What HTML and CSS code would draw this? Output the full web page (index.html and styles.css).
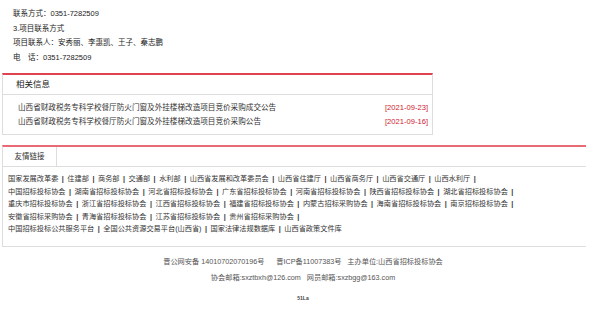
FILE: index.html
```html
<!DOCTYPE html>
<html lang="zh-CN">
<head>
    <meta charset="UTF-8">
    <title>山西省招标投标协会</title>
    <link rel="stylesheet" href="styles.css">
</head>
<body>
    <div class="contact">
        <p>联系方式：0351-7282509</p>
        <p>3.项目联系方式</p>
        <p>项目联系人：安秀丽、李惠凯、王子、秦志鹏</p>
        <p>电　话：0351-7282509</p>
    </div>

    <div class="related">
        <div class="related-head">相关信息</div>
        <ul class="related-list">
            <li><a href="#">山西省财政税务专科学校餐厅防火门窗及外挂楼梯改造项目竞价采购成交公告</a><span class="date">[2021-09-23]</span></li>
            <li><a href="#">山西省财政税务专科学校餐厅防火门窗及外挂楼梯改造项目竞价采购公告</a><span class="date">[2021-09-16]</span></li>
        </ul>
    </div>

    <div class="links">
        <div class="links-head"><span class="tab">友情链接</span></div>
        <div class="links-body">
            <div class="row">国家发展改革委<i>|</i>住建部<i>|</i>商务部<i>|</i>交通部<i>|</i>水利部<i>|</i>山西省发展和改革委员会<i>|</i>山西省住建厅<i>|</i>山西省商务厅<i>|</i>山西省交通厅<i>|</i>山西水利厅<i>|</i></div>
            <div class="row">中国招标投标协会<i>|</i>湖南省招标投标协会<i>|</i>河北省招标投标协会<i>|</i>广东省招标投标协会<i>|</i>河南省招标投标协会<i>|</i>陕西省招标投标协会<i>|</i>湖北省招标投标协会<i>|</i></div>
            <div class="row">重庆市招标投标协会<i>|</i>浙江省招标投标协会<i>|</i>江西省招标投标协会<i>|</i>福建省招标投标协会<i>|</i>内蒙古招标采购协会<i>|</i>海南省招标投标协会<i>|</i>南京招标投标协会<i>|</i></div>
            <div class="row">安徽省招标采购协会<i>|</i>青海省招标投标协会<i>|</i>江苏省招标投标协会<i>|</i>贵州省招标采购协会<i>|</i></div>
            <div class="row">中国招标投标公共服务平台<i>|</i>全国公共资源交易平台(山西省)<i>|</i>国家法律法规数据库<i>|</i>山西省政策文件库</div>
        </div>
    </div>

    <div class="footer">
        <p>晋公网安备 14010702070196号<span class="gap"></span>晋ICP备11007383号<span class="gap small"></span>主办单位:山西省招标投标协会</p>
        <p>协会邮箱:sxztbxh@126.com<span class="gap small"></span>网员邮箱:sxzbgg@163.com</p>
        <div class="counter">51La</div>
    </div>
</body>
</html>
```

FILE: styles.css
```css
body {
    margin: 0;
    background-color: #fff;
    color: #333;
    font-family: "Liberation Sans", "Noto Sans CJK SC", sans-serif;
    font-size: 7.2px;
}
p {
    margin: 0;
}
a {
    color: #333;
    text-decoration: none;
}
.contact {
    padding: 7px 0 0 13px;
    font-size: 7.5px;
    line-height: 14.5px;
    color: #222;
}
.related {
    margin: 8px 0 0 2px;
    width: 429px;
    border: 1px solid #ddd;
    border-top: 2px solid #e0434f;
}
.related-head {
    height: 19px;
    line-height: 19px;
    padding-left: 13px;
    font-size: 8.5px;
    color: #222;
    border-bottom: 1px solid #ddd;
}
.related-list {
    list-style: none;
    margin: 0;
    padding: 6px 4px 5px 15px;
    font-size: 7.6px;
}
.related-list li {
    display: flex;
    justify-content: space-between;
    line-height: 14px;
}
.date {
    color: #d0202f;
}
.links {
    margin: 10px 0 0 2px;
    width: 583px;
    border-left: 1px solid #ddd;
    border-bottom: 1px solid #ddd;
    border-top: 2px solid #e86a74;
}
.links-head {
    height: 19px;
    border-bottom: 1px solid #ddd;
}
.tab {
    display: inline-block;
    width: 53px;
    height: 19px;
    line-height: 19px;
    text-align: center;
    font-size: 7.5px;
    border-right: 1px solid #ddd;
}
.links-body {
    padding: 6px 0 10px 5px;
    line-height: 12.5px;
}
.row i {
    font-style: normal;
    font-weight: bold;
    margin: 0 3.5px;
}
.footer {
    margin-top: 7px;
    text-align: center;
    color: #555;
    line-height: 16px;
}
.gap {
    display: inline-block;
    width: 12px;
}
.gap.small {
    width: 6px;
}
.counter {
    margin-top: 4px;
    font-size: 5px;
    font-weight: bold;
    color: #444;
}
```
